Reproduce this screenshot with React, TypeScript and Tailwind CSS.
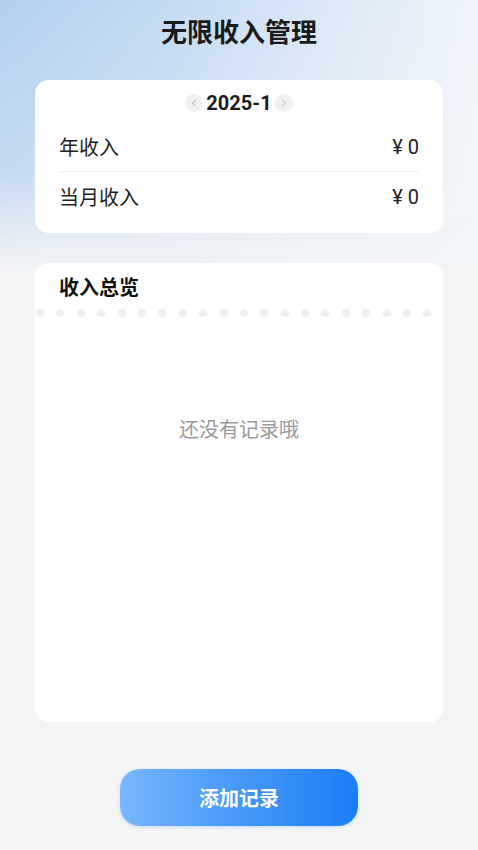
import { ChevronLeft, ChevronRight } from 'lucide-react';

const rows = [
  { label: '年收入', value: '¥ 0' },
  { label: '当月收入', value: '¥ 0' },
];

export default function App() {
  const dots = Array.from({ length: 20 }, (_, i) => i);

  return (
    <div className="min-h-[850px] w-full bg-[#f2f4f6] bg-[linear-gradient(180deg,rgba(242,244,246,0)_0%,rgba(242,244,246,0.25)_170px,#f2f4f6_268px),linear-gradient(100deg,#b2cfee_0%,#c6dcf2_30%,#e2edf8_60%,#f1f5fa_80%,#eef3f9_100%)] font-['Noto_Sans_CJK_SC','Noto_Sans',sans-serif] text-[#1f1f1f]">
      <div className="flex flex-col items-center pt-[13px]">
        <h1 className="text-[26px] font-bold leading-[36px] text-[#1a1a1a]">无限收入管理</h1>
      </div>

      <div className="mx-[35px] mt-[31px] rounded-[14px] bg-white px-6 pt-3 pb-[11px]">
        <div className="flex h-[22px] items-center justify-center">
          <span className="flex h-[18px] w-[18px] items-center justify-center rounded-full bg-[#f1f1f1] text-[#a8a8a8]">
            <ChevronLeft className="h-3 w-3" strokeWidth={2} />
          </span>
          <span className="mx-[3px] font-['Roboto','Noto_Sans_CJK_SC',sans-serif] text-[20px] font-bold leading-[22px] text-[#1c1c1c]">2025-1</span>
          <span className="flex h-[18px] w-[18px] items-center justify-center rounded-full bg-[#f1f1f1] text-[#a8a8a8]">
            <ChevronRight className="h-3 w-3" strokeWidth={2} />
          </span>
        </div>
        <div className="mt-2">
          {rows.map((r, i) => (
            <div
              key={r.label}
              className={`flex h-[50px] items-center justify-between text-[20px] ${i === 0 ? 'border-b border-[#efefef]' : ''}`}
            >
              <span>{r.label}</span>
              <span className="font-['Roboto','Noto_Sans_CJK_SC',sans-serif] font-normal text-[#222]">{r.value}</span>
            </div>
          ))}
        </div>
      </div>

      <div className="mx-[35px] mt-[30px] flex h-[459px] flex-col rounded-[14px] bg-white pt-[10px]">
        <div className="px-6 text-[20px] font-bold leading-[28px] text-[#111]">收入总览</div>
        <div className="mt-[8px] ml-[1px] flex gap-[12.4px]">
          {dots.map((d) => (
            <span key={d} className="h-[8px] w-[8px] rounded-full bg-[#efefef]" />
          ))}
        </div>
        <div className="mt-[98px] text-center text-[20px] leading-[28px] text-[#9a9a9a]">还没有记录哦</div>
      </div>

      <div className="mt-[47px] flex justify-center">
        <button className="h-[57px] w-[238px] rounded-[20px] bg-[linear-gradient(90deg,#78b7fb_0%,#4b9bf8_45%,#1b7ef6_100%)] text-[20px] font-bold text-white shadow-[0_1px_3px_rgba(60,140,240,0.25)]">
          添加记录
        </button>
      </div>
    </div>
  );
}
